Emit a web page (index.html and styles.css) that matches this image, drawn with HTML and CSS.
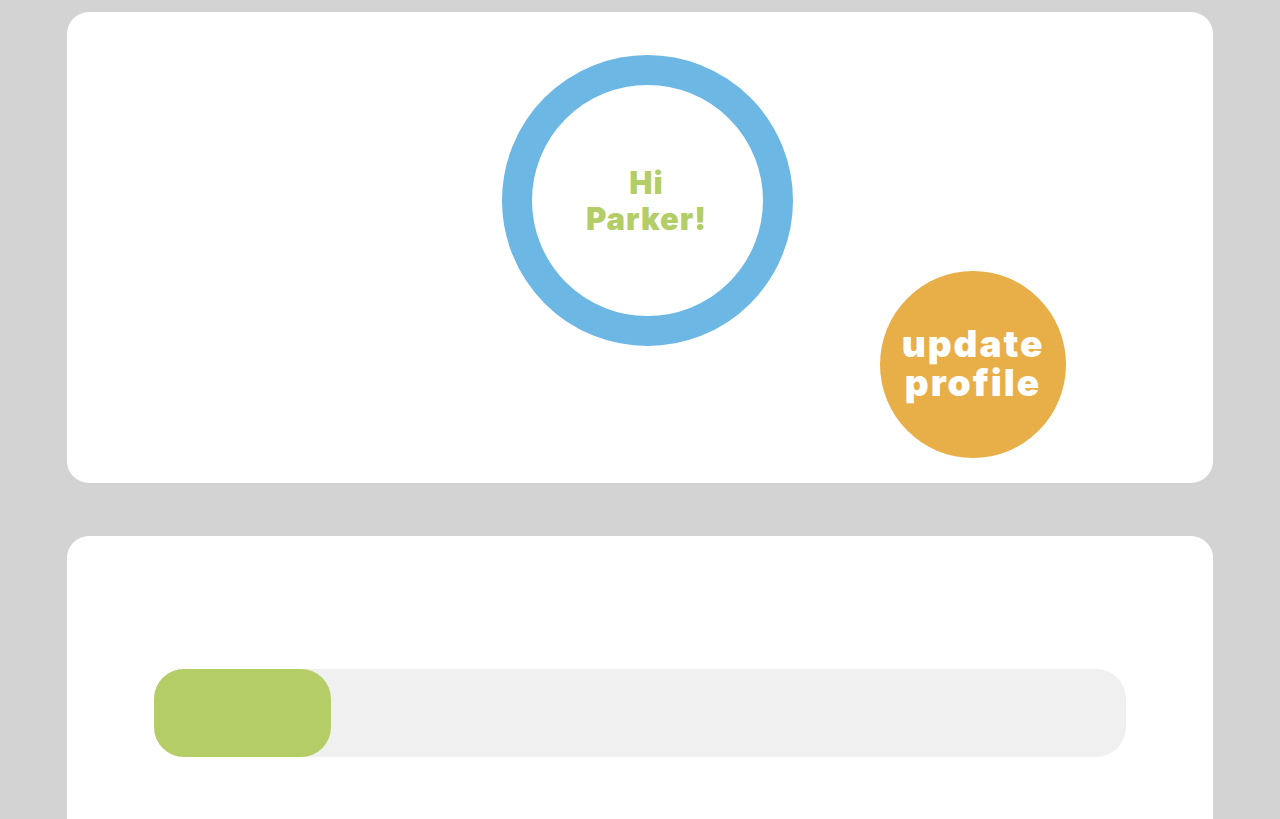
FILE: index.html
```html
<!DOCTYPE html>
<html lang="en">
<head>
    <meta charset="UTF-8">
    <meta name="viewport" content="width=device-width, initial-scale=1.0">
    <title>Profile</title>
    <link rel="stylesheet" href="styles.css">
</head>
<body>
    <section class="card profile_card">
        <div class="greeting_ring">
            <p class="greeting">Hi<br>Parker!</p>
        </div>
        <a href="#" class="update_btn">update<br>profile</a>
    </section>

    <section class="card progress_card">
        <div class="progress">
            <div class="progress_fill" style="width: 18.2%;"></div>
        </div>
    </section>
</body>
</html>
```

FILE: styles.css
```css
*{
    padding: 0;
    margin: 0;
    box-sizing: border-box;
}
html, body{
    height: 100%;
    overflow: hidden;
}
body{
    background-color: #d3d3d3;
    padding: 12px 67px 0;
    font-family: 'Inter', 'Open Sans', sans-serif;
}
a{
    text-decoration: none;
}
.card{
    background-color: #fff;
    border-radius: 22px;
}
.profile_card{
    position: relative;
    height: 471px;
    padding-top: 43px;
    display: flex;
    flex-direction: column;
    align-items: center;
}
.greeting_ring{
    width: 291px;
    height: 291px;
    margin-left: 15px;
    border: 30px solid #6db7e5;
    border-radius: 50%;
    display: flex;
    align-items: center;
    justify-content: center;
}
.greeting{
    color: #b3cd67;
    font-size: 31px;
    font-weight: 900;
    line-height: 36px;
    text-align: center;
    letter-spacing: 1px;
    margin-left: -2px;
    margin-top: 1px;
}
/* 카드 위에 떠 있는 버튼 */
.update_btn{
    position: absolute;
    left: 813px;
    top: 259px;
    width: 186px;
    height: 187px;
    border-radius: 50%;
    background-color: #e8af49;
    color: #fff;
    font-size: 37px;
    font-weight: 900;
    line-height: 39px;
    text-align: center;
    display: flex;
    align-items: center;
    justify-content: center;
    letter-spacing: 2px;
    padding-bottom: 4px;
}
.progress_card{
    margin-top: 53px;
    height: 400px;
    padding: 133px 87px;
}
.progress{
    height: 88px;
    border-radius: 30px;
    background-color: #f0f0f0;
}
.progress_fill{
    height: 100%;
    border-radius: 30px;
    background-color: #b4cd67;
}
```
